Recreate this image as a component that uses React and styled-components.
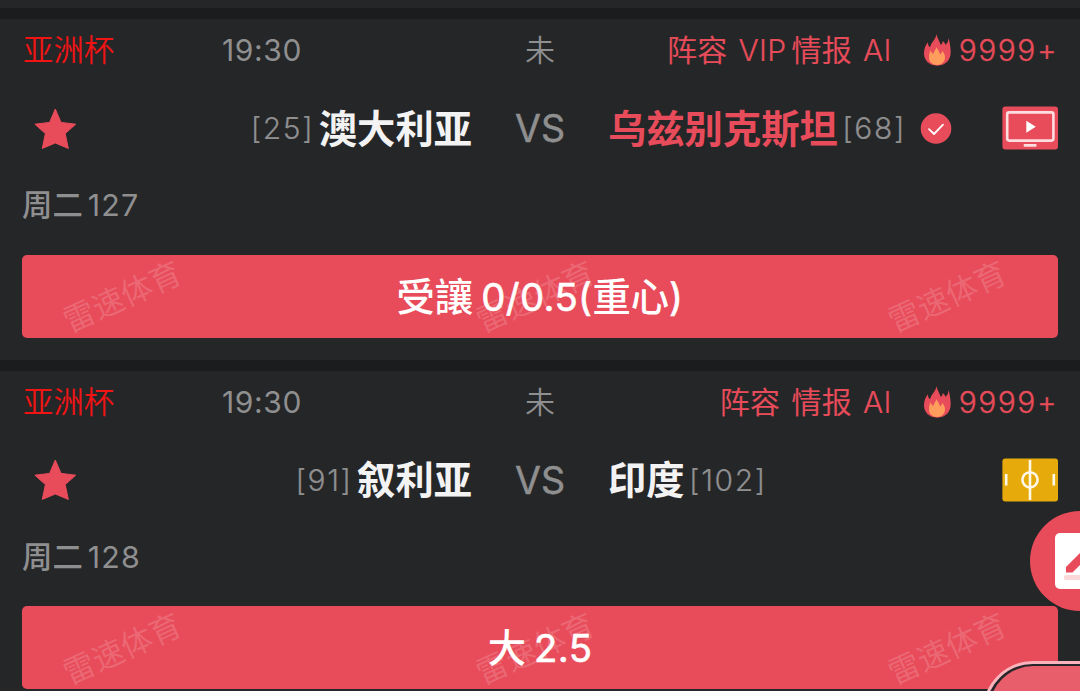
import React from "react";
import styled, { createGlobalStyle } from "styled-components";

const GlobalStyle = createGlobalStyle`
  :root {
    --panel: #252628;
    --gap: #1b1c1e;
    --red: #e84c5a;
    --gray: #8f8f90;
  }

  * {
    box-sizing: border-box;
  }

  body {
    margin: 0;
    background-color: var(--panel);
    font-family: Inter, "Noto Sans CJK SC", sans-serif;
    overflow: hidden;
  }
`;

const Screen = styled.div`
  position: relative;
  width: 1080px;
  height: 691px;
  padding-top: 8px;
  overflow: hidden;
  background-color: var(--panel);
`;

const MatchStyled = styled.div`
  height: 351.5px;
  border-top: 11px solid var(--gap);
  padding: 0 22px;
`;

const Row = styled.div`
  display: grid;
  grid-template-columns: 1fr ${props => props.$middle} 1fr;
  align-items: center;
  height: ${props => props.$height};
  font-size: 30px;
  line-height: 1;
  white-space: nowrap;
  color: var(--gray);
`;

const Side = styled.div`
  display: flex;
  align-items: center;
  justify-content: ${props => (props.$end ? "flex-end" : "flex-start")};
`;

const Middle = styled.div`
  text-align: center;
  font-weight: 350;
`;

const League = styled.span`
  width: 200px;
  padding: 1px 0 0 1px;
  font-size: 30.4px;
  font-weight: 350;
  color: #f01414;
`;

const Time = styled.span`
  letter-spacing: 0.6px;
`;

const Tags = styled.div`
  display: flex;
  margin-right: 31px;
  font-weight: 350;
  color: var(--red);
  -webkit-text-stroke: 0.2px var(--red);
`;

const Tag = styled.span`
  margin-left: ${props => props.$space};
  letter-spacing: 0.3px;
`;

const Heat = styled.span`
  margin: 0 0 0 8px;
  font-weight: 350;
  letter-spacing: 1.5px;
  color: var(--red);
  -webkit-text-stroke: 0.3px var(--red);
`;

const Versus = styled(Middle)`
  font-size: 37.6px;
  font-weight: 400;
  -webkit-text-stroke: 0.5px var(--gray);
`;

const Team = styled.span`
  font-size: 38.3px;
  font-weight: 700;
  color: ${props => (props.$picked ? "var(--red)" : "#f3f3f3")};
`;

const Rank = styled.span`
  margin: 0 4.5px 0 4.5px;
  padding-bottom: 2px;
  font-weight: 300;
  letter-spacing: 1.6px;
  -webkit-text-stroke: 0.2px var(--gray);
`;

const Verified = styled.div`
  display: flex;
  margin-left: 10px;
`;

const Favorite = styled.div`
  display: flex;
  margin: 0 auto 1px 11px;
`;

const Media = styled.div`
  display: flex;
  margin: 0 0 2px auto;
`;

const Issue = styled.div`
  display: flex;
  align-items: center;
  gap: 5px;
  height: 57px;
  font-size: 30.4px;
  line-height: 1;
  letter-spacing: 1.1px;
  color: var(--gray);

  b {
    font-weight: 500;
    letter-spacing: 0;
  }
`;

const Tip = styled.div`
  position: relative;
  display: flex;
  align-items: center;
  justify-content: center;
  height: 83px;
  margin-top: 20.5px;
  border-radius: 5px;
  background-color: var(--red);
`;

const TipText = styled.div`
  position: relative;
  display: flex;
  gap: 8px;
  padding-top: 2px;
  font-size: 38.3px;
  font-weight: 500;
  line-height: 1;
  white-space: nowrap;
  color: white;

  .number {
    font-weight: 400;
    letter-spacing: 0.4px;
    -webkit-text-stroke: 0.6px white;
  }
`;

const Watermarks = styled.div`
  position: absolute;
  inset: 0;
  display: flex;
  align-items: center;
  justify-content: space-between;
  padding: 4px 47px 0 38px;

  span {
    font-size: 31.4px;
    line-height: 1;
    font-weight: 400;
    color: rgba(255, 255, 255, 0.16);
    transform: rotate(-24.4deg);
  }
`;

const FloatButton = styled.div`
  position: absolute;
  top: 511px;
  left: 1030px;
  display: flex;
  align-items: center;
  justify-content: center;
  width: 100px;
  height: 100px;
  padding-left: 6px;
  border-radius: 50%;
  background-color: var(--red);
`;

const FloatPill = styled.div`
  position: absolute;
  top: 660.5px;
  left: 983px;
  width: 240px;
  height: 100px;
  border: 3px solid #fbb4bb;
  border-radius: 50px;
  background-color: #25262a;
  padding: 2.6px;

  div {
    height: 100%;
    border-radius: 46px;
    background-color: #e85f6b;
  }
`;

const StarIcon = () => (
  <svg width="44" height="44" viewBox="0 0 44 44">
    <path
      d="M22.3 2 L28 15.4 L42.7 17.2 L32.2 26.6 L35.3 41.4 L22.3 36 L9.3 41.4 L12.4 26.6 L1.9 17.2 L16.6 15.4 Z"
      fill="#e84c5a"
      stroke="#e84c5a"
      strokeWidth="1"
      strokeLinejoin="round"
    />
  </svg>
);

const FireIcon = () => (
  <svg width="28" height="32" viewBox="0 0 84 96">
    <path
      d="M41 0 C41 10 49 19 53 32 C57 31 59 27 59 21 C64 25 67 29 68 33 C73 28 76 21 77 12 C80 26 83 40 83 55 C83 80 66 95 43 95 C19 95 3 80 3 58 C3 44 8 34 15 25 C15 33 17 37 21 40 C24 26 38 17 41 0 Z"
      fill="#e84c5a"
    />
    <path
      d="M40 39 C43 46 49 51 51 61 C55 59 57 55 58 50 C64 58 66 64 66 70 C66 84 56 93 42 93 C28 93 18 84 18 70 C18 62 20 55 23 49 C25 55 27 58 30 60 C33 52 39 47 40 39 Z"
      fill="#ff9e5c"
    />
  </svg>
);

const CheckIcon = () => (
  <svg width="32" height="32" viewBox="0 0 32 32">
    <circle cx="16" cy="15.5" r="15.3" fill="#e84c5a" />
    <path
      d="M9 16.2 L14 21 L23 11.7"
      fill="none"
      stroke="#fff"
      strokeWidth="1.8"
      strokeLinecap="round"
      strokeLinejoin="round"
    />
  </svg>
);

const VideoIcon = () => (
  <svg width="56" height="44" viewBox="0 0 56 44">
    <rect x="0.4" y="0.4" width="55.6" height="43.2" rx="3" fill="#e84c5a" />
    <rect
      x="5.2"
      y="6.4"
      width="46.2"
      height="28.2"
      rx="2"
      fill="none"
      stroke="#fcdde0"
      strokeWidth="2.6"
    />
    <path d="M24.3 14.8 L33.8 20.7 L24.3 26.8 Z" fill="#fff" />
    <rect x="21.6" y="38" width="13" height="2.7" rx="1" fill="#fcdde0" />
  </svg>
);

const PitchIcon = () => (
  <svg width="56" height="44" viewBox="0 0 56 44">
    <rect x="0.4" y="0.4" width="55.6" height="43.2" rx="3" fill="#e6ab0b" />
    <g fill="none" stroke="#fff8e8" strokeWidth="2.6">
      <path d="M28 2 V42" />
      <circle cx="28" cy="21.8" r="7.6" />
      <path d="M4.2 16 V27.5 M51.8 16 V27.5" />
    </g>
  </svg>
);

const EditIcon = () => (
  <svg width="56" height="56" viewBox="0 0 56 56">
    <rect width="56" height="56" rx="5" fill="#fff" />
    <rect x="9" y="42" width="38" height="5" rx="2" fill="#fbd7da" />
    <path d="M11 39.5 V34 L36 9 L42 15 L17.5 39.5 Z" fill="#e84c5a" />
  </svg>
);

const matches = [
  {
    league: "亚洲杯",
    time: "19:30",
    tags: [["阵容"], ["VIP", "11px"], ["情报", "5px"], ["AI", "11px"]],
    home: "澳大利亚",
    homeRank: "[25]",
    away: "乌兹别克斯坦",
    awayRank: "[68]",
    picked: true,
    icon: <VideoIcon />,
    issue: "127",
    tip: ["受讓", "0/0.5(", "重心", ")"],
  },
  {
    league: "亚洲杯",
    time: "19:30",
    tags: [["阵容"], ["情报", "11px"], ["AI", "11px"]],
    home: "叙利亚",
    homeRank: "[91]",
    away: "印度",
    awayRank: "[102]",
    picked: false,
    icon: <PitchIcon />,
    issue: "128",
    tip: ["大", "2.5"],
  },
];

function Match({ match }) {
  const { league, time, tags, home, homeRank, away, awayRank, picked, icon, issue, tip } = match;
  const [pick, line, note, close] = tip;
  return (
    <MatchStyled>
      <Row $height="62px" $middle="40px">
        <Side>
          <League>{league}</League>
          <Time>{time}</Time>
        </Side>
        <Middle>未</Middle>
        <Side $end>
          <Tags>
            {tags.map(([text, space]) => (
              <Tag key={text} $space={space || 0}>
                {text}
              </Tag>
            ))}
          </Tags>
          <FireIcon />
          <Heat>9999+</Heat>
        </Side>
      </Row>
      <Row $height="96px" $middle="136px">
        <Side>
          <Favorite>
            <StarIcon />
          </Favorite>
          <Rank>{homeRank}</Rank>
          <Team>{home}</Team>
        </Side>
        <Versus>VS</Versus>
        <Side>
          <Team $picked={picked}>{away}</Team>
          <Rank>{awayRank}</Rank>
          {picked && (
            <Verified>
              <CheckIcon />
            </Verified>
          )}
          <Media>{icon}</Media>
        </Side>
      </Row>
      <Issue>
        <b>周二</b>
        <span>{issue}</span>
      </Issue>
      <Tip>
        <Watermarks>
          <span>雷速体育</span>
          <span>雷速体育</span>
          <span>雷速体育</span>
        </Watermarks>
        <TipText>
          <span>{pick}</span>
          <span>
            <span className="number">{line}</span>
            {note}
            <span className="number">{close}</span>
          </span>
        </TipText>
      </Tip>
    </MatchStyled>
  );
}

function App() {
  return (
    <>
      <GlobalStyle />
      <Screen>
        {matches.map(match => (
          <Match key={match.issue} match={match} />
        ))}
        <FloatButton>
          <EditIcon />
        </FloatButton>
        <FloatPill>
          <div></div>
        </FloatPill>
      </Screen>
    </>
  );
}

export default App;
